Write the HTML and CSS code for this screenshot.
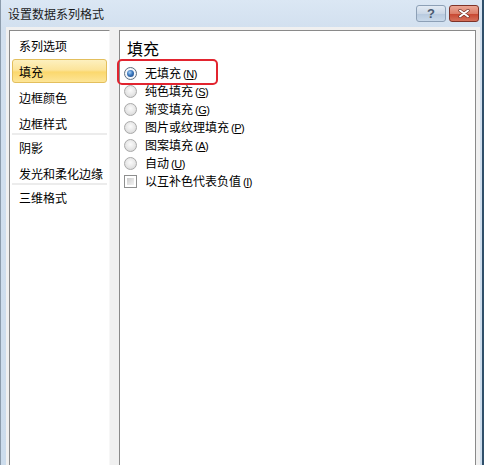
FILE: index.html
```html
<!DOCTYPE html>
<html lang="zh-CN">
<head>
<meta charset="utf-8">
<title>设置数据系列格式</title>
<link rel="stylesheet" href="styles.css">
</head>
<body>
<div class="window">
  <div class="titlebar">
    <span class="title">设置数据系列格式</span>
    <div class="caption-buttons">
      <span class="cbtn help">?</span>
      <span class="cbtn close"><svg width="12" height="9" viewBox="0 0 12 9"><path d="M2 1.5 L10 7.5 M10 1.5 L2 7.5" stroke="#6b2a20" stroke-width="3.2" stroke-linecap="round"/><path d="M2 1.5 L10 7.5 M10 1.5 L2 7.5" stroke="#ffffff" stroke-width="2" stroke-linecap="round"/></svg></span>
    </div>
  </div>
  <div class="client">
    <nav class="sidebar">
      <div class="group">
        <div class="item">系列选项</div>
        <div class="item selected">填充</div>
        <div class="item">边框颜色</div>
        <div class="item">边框样式</div>
      </div>
      <div class="group">
        <div class="item">阴影</div>
        <div class="item">发光和柔化边缘</div>
      </div>
      <div class="group">
        <div class="item">三维格式</div>
      </div>
    </nav>
    <section class="pane">
      <h2 class="pane-title">填充</h2>
      <div class="options">
        <div class="opt marked"><span class="radio checked"></span><span class="label">无填充<span class="key">(<u>N</u>)</span></span></div>
        <div class="opt"><span class="radio"></span><span class="label">纯色填充<span class="key">(<u>S</u>)</span></span></div>
        <div class="opt"><span class="radio"></span><span class="label">渐变填充<span class="key">(<u>G</u>)</span></span></div>
        <div class="opt"><span class="radio"></span><span class="label">图片或纹理填充<span class="key">(<u>P</u>)</span></span></div>
        <div class="opt"><span class="radio"></span><span class="label">图案填充<span class="key">(<u>A</u>)</span></span></div>
        <div class="opt"><span class="radio"></span><span class="label">自动<span class="key">(<u>U</u>)</span></span></div>
        <div class="opt"><span class="check"></span><span class="label">以互补色代表负值<span class="key">(<u>I</u>)</span></span></div>
      </div>
    </section>
  </div>
</div>
</body>
</html>
```

FILE: styles.css
```css
html, body {
  margin: 0;
  padding: 0;
  width: 484px;
  height: 465px;
  overflow: hidden;
  background: #cfdeee;
}

.window {
  box-sizing: border-box;
  width: 484px;
  height: 465px;
  display: flex;
  flex-direction: column;
  background: linear-gradient(to bottom, #dbe7f4 0px, #d2e0ef 28px, #ccdcec 100%);
  border-left: 1px solid #8c9cac;
  border-right: 2px solid #2f4f6a;
  font-family: "Noto Sans CJK SC", "Noto Sans", sans-serif;
  font-size: 12px;
  color: #000;
}

.titlebar {
  height: 27px;
  flex: none;
  display: flex;
  justify-content: space-between;
  align-items: flex-start;
  padding-left: 7px;
  padding-right: 3px;
}

.title {
  line-height: 28px;
  font-size: 12px;
  color: #1a1a1a;
}

.caption-buttons {
  display: flex;
  gap: 3px;
  margin-top: 5px;
}

.cbtn {
  box-sizing: border-box;
  width: 30px;
  height: 17px;
  border-radius: 3px;
  display: flex;
  align-items: center;
  justify-content: center;
}

.help {
  border: 1px solid #8da0b6;
  background: linear-gradient(to bottom, #e3ebf4 0%, #cbd8e7 50%, #b6c9de 51%, #c9d9ea 100%);
  color: #4a5a70;
  font-family: "Liberation Sans", sans-serif;
  font-weight: bold;
  font-size: 13px;
  line-height: 15px;
}

.close {
  border: 1px solid #7e3328;
  background: linear-gradient(to bottom, #eba796 0%, #dc7f6a 50%, #c7452f 51%, #d5705a 100%);
}

.close svg {
  display: block;
}

.client {
  flex: 1;
  display: flex;
  gap: 9px;
  margin: 0 2px 0 5px;
  padding: 3px 4px 0 3px;
  background: #f0f0f0;
  min-height: 0;
}

.sidebar {
  box-sizing: border-box;
  width: 101px;
  flex: none;
  background: #fff;
  border-left: 1px solid #8a8a8a;
  border-top: 1px solid #8a8a8a;
  border-right: 1px solid #f7f7f7;
  padding: 2px 2px 0 2px;
}

.group + .group {
  border-top: 2px solid #ececec;
  margin-top: -2px;
}

.item {
  box-sizing: border-box;
  height: 24px;
  line-height: 24px;
  padding-left: 6px;
  white-space: nowrap;
  border: 1px solid transparent;
  border-radius: 3px;
}

.item + .item {
  margin-top: 2px;
}

.item.selected {
  border-color: #e3bf5d;
  background: linear-gradient(to bottom, #fdf0bf 0%, #fce49a 45%, #fbd86e 55%, #fde597 100%);
}

.pane {
  flex: 1;
  background: #fff;
  border: 1px solid #8a8a8a;
  border-bottom: none;
  padding: 7px 0 0 4px;
}

.pane-title {
  margin: 0 0 6px 3px;
  font-size: 16px;
  font-weight: normal;
  line-height: 20px;
}

.opt {
  height: 18px;
  display: flex;
  align-items: center;
  position: relative;
}

.opt.marked::before {
  content: "";
  position: absolute;
  left: -7px;
  top: -5px;
  width: 101px;
  height: 26px;
  box-sizing: border-box;
  border: 2px solid #e2242f;
  border-radius: 5px;
}

.radio {
  box-sizing: border-box;
  width: 13px;
  height: 13px;
  border-radius: 50%;
  border: 1px solid #a9a9a9;
  background: radial-gradient(circle at 50% 40%, #fbfbfb 0%, #e6e6e6 55%, #cfcfcf 100%);
  margin-right: 8px;
  display: flex;
  align-items: center;
  justify-content: center;
  flex: none;
}

.radio.checked {
  border-color: #5f6f80;
  background: radial-gradient(circle, #ffffff 40%, #dfe6ee 100%);
}

.radio.checked::after {
  content: "";
  width: 7px;
  height: 7px;
  border-radius: 50%;
  background: radial-gradient(circle at 40% 35%, #a9d2f7 0%, #3b77bd 45%, #173f78 100%);
}

.check {
  box-sizing: border-box;
  width: 13px;
  height: 13px;
  border: 1px solid #8e8f8f;
  background: #fff;
  margin-right: 8px;
  flex: none;
  display: flex;
  padding: 2px;
}

.check::after {
  content: "";
  flex: 1;
  background: linear-gradient(135deg, #cbcbcb 0%, #e4e4e4 60%, #f2f2f2 100%);
}

.label {
  line-height: 18px;
  white-space: nowrap;
}

.key {
  font-family: "Liberation Sans", sans-serif;
  font-size: 11px;
  letter-spacing: -0.5px;
  margin-left: 2px;
}
```
